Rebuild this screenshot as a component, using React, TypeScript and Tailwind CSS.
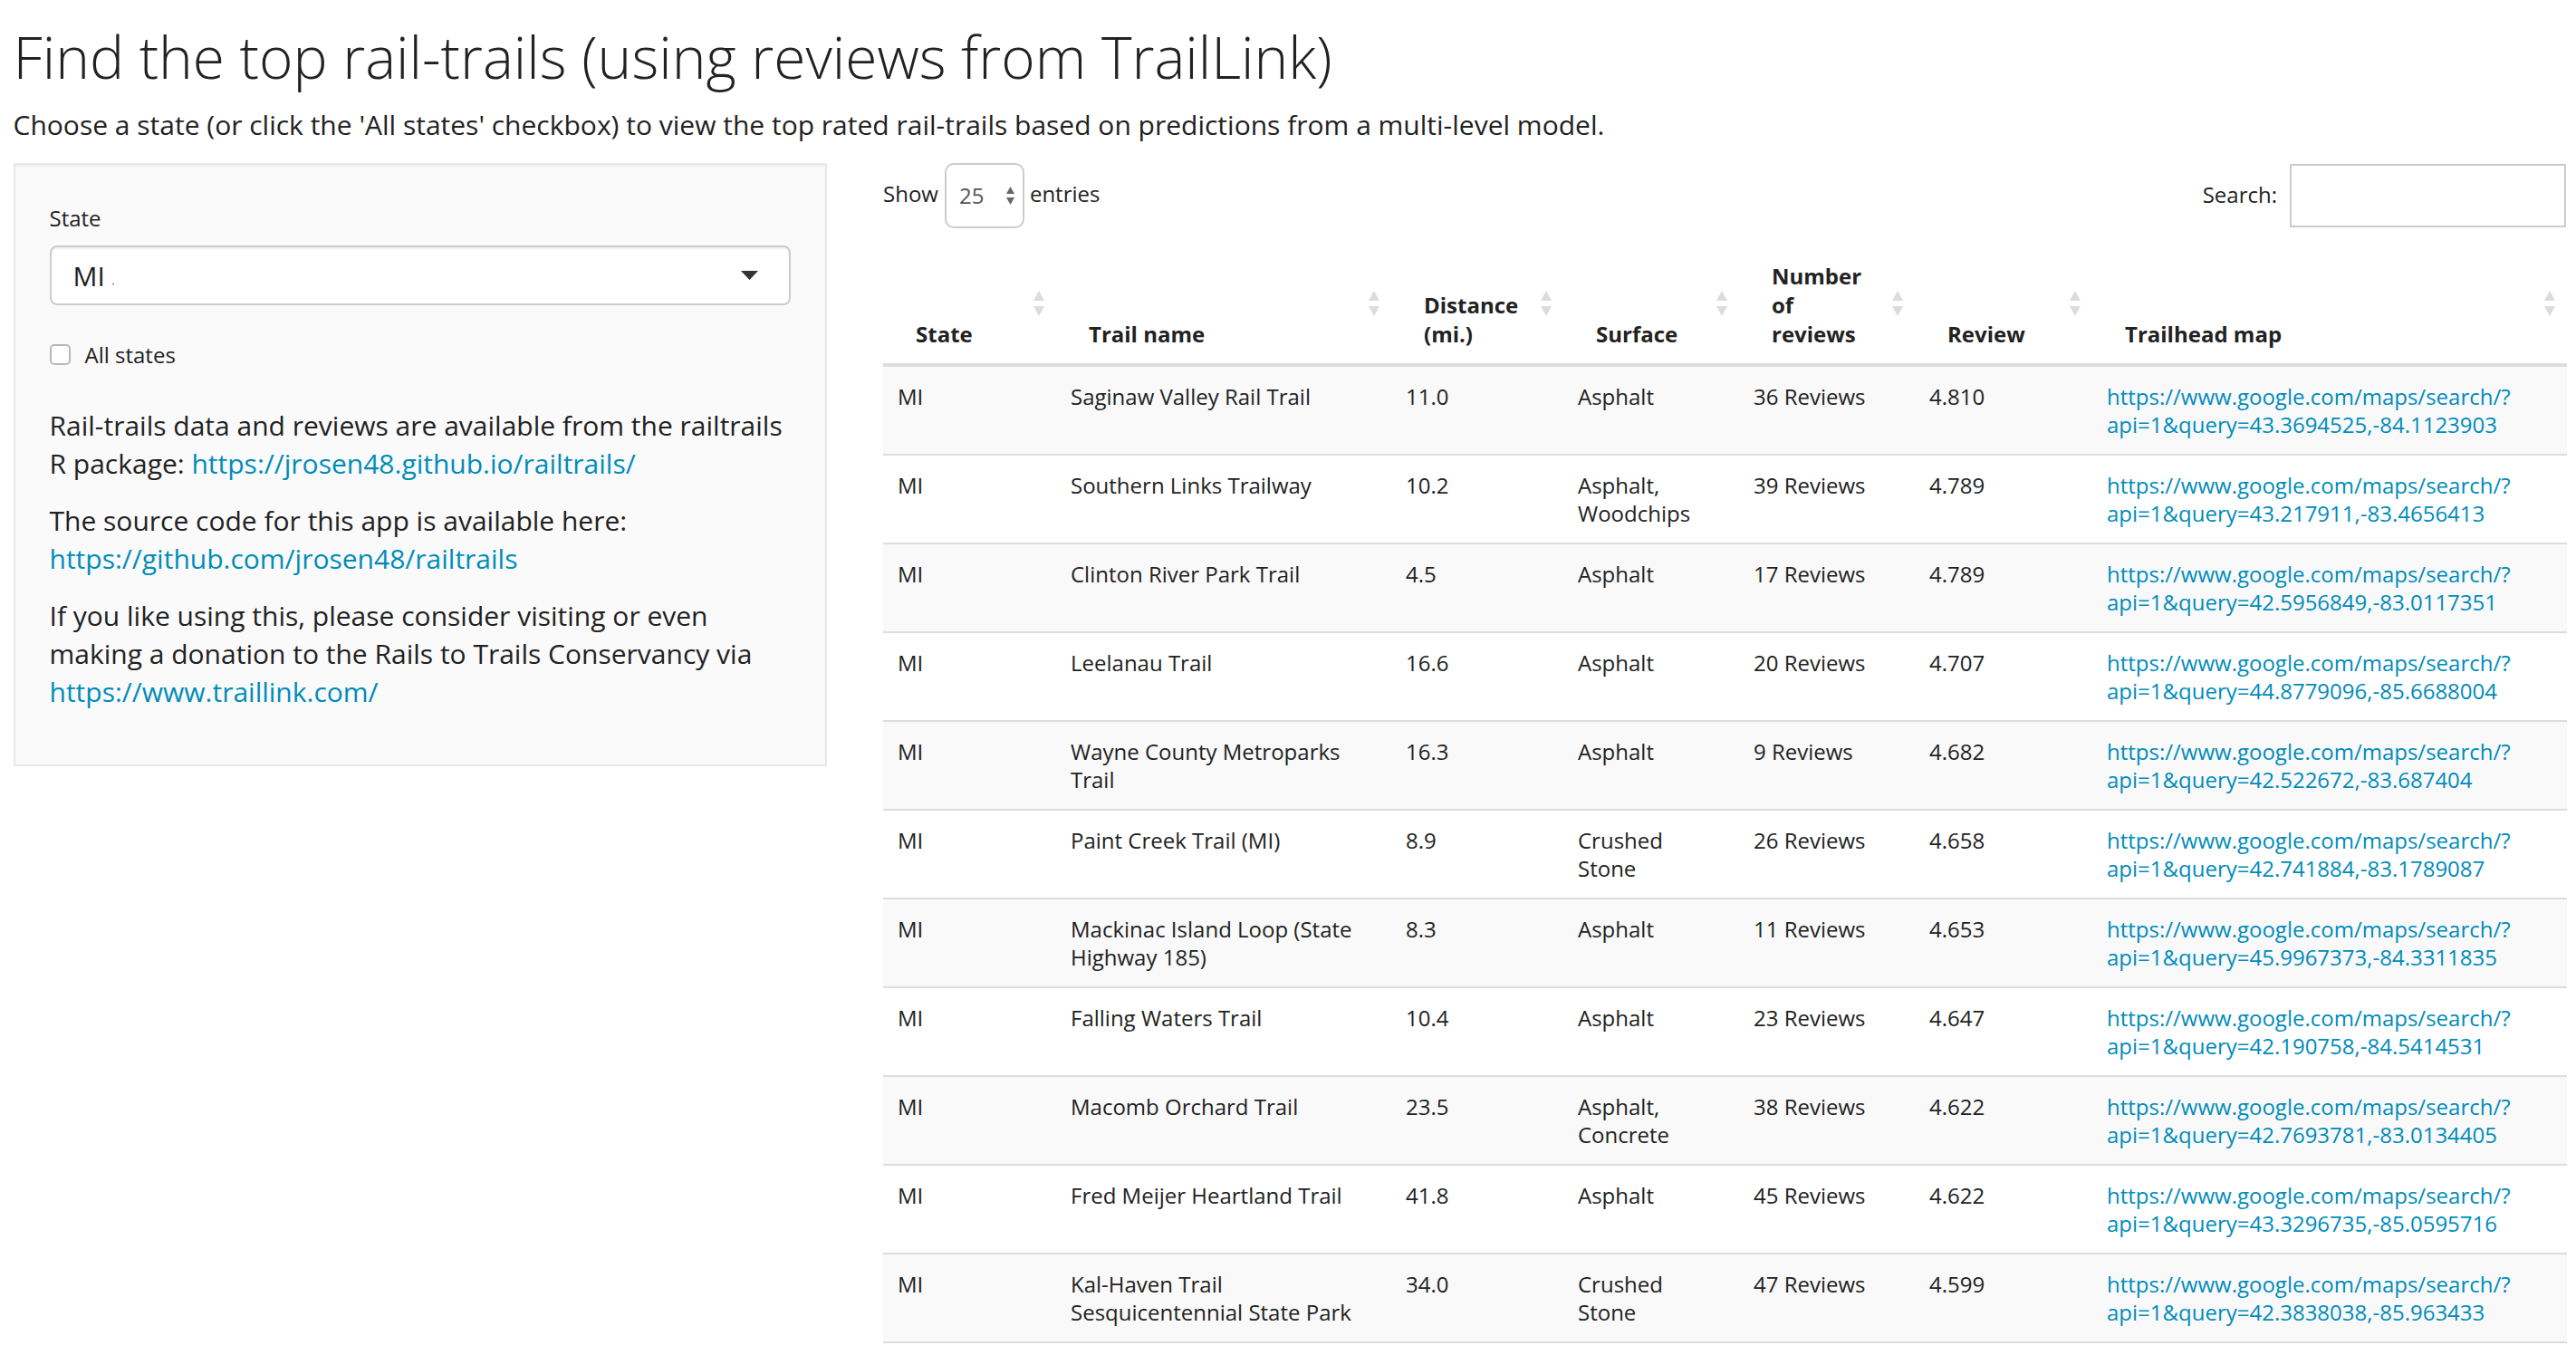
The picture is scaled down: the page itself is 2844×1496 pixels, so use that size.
import React from 'react';

// One row of the ranked trail table
interface Trail {
  state: string;
  name: string;
  dist: string;
  surface: string;
  reviews: string;
  review: string;
  query: string;
}

const trails: Trail[] = [
  { state: 'MI', name: 'Saginaw Valley Rail Trail', dist: '11.0', surface: 'Asphalt', reviews: '36 Reviews', review: '4.810', query: '43.3694525,-84.1123903' },
  { state: 'MI', name: 'Southern Links Trailway', dist: '10.2', surface: 'Asphalt, Woodchips', reviews: '39 Reviews', review: '4.789', query: '43.217911,-83.4656413' },
  { state: 'MI', name: 'Clinton River Park Trail', dist: '4.5', surface: 'Asphalt', reviews: '17 Reviews', review: '4.789', query: '42.5956849,-83.0117351' },
  { state: 'MI', name: 'Leelanau Trail', dist: '16.6', surface: 'Asphalt', reviews: '20 Reviews', review: '4.707', query: '44.8779096,-85.6688004' },
  { state: 'MI', name: 'Wayne County Metroparks Trail', dist: '16.3', surface: 'Asphalt', reviews: '9 Reviews', review: '4.682', query: '42.522672,-83.687404' },
  { state: 'MI', name: 'Paint Creek Trail (MI)', dist: '8.9', surface: 'Crushed Stone', reviews: '26 Reviews', review: '4.658', query: '42.741884,-83.1789087' },
  { state: 'MI', name: 'Mackinac Island Loop (State Highway 185)', dist: '8.3', surface: 'Asphalt', reviews: '11 Reviews', review: '4.653', query: '45.9967373,-84.3311835' },
  { state: 'MI', name: 'Falling Waters Trail', dist: '10.4', surface: 'Asphalt', reviews: '23 Reviews', review: '4.647', query: '42.190758,-84.5414531' },
  { state: 'MI', name: 'Macomb Orchard Trail', dist: '23.5', surface: 'Asphalt, Concrete', reviews: '38 Reviews', review: '4.622', query: '42.7693781,-83.0134405' },
  { state: 'MI', name: 'Fred Meijer Heartland Trail', dist: '41.8', surface: 'Asphalt', reviews: '45 Reviews', review: '4.622', query: '43.3296735,-85.0595716' },
  { state: 'MI', name: 'Kal-Haven Trail Sesquicentennial State Park', dist: '34.0', surface: 'Crushed Stone', reviews: '47 Reviews', review: '4.599', query: '42.3838038,-85.963433' },
];

const columns: { lines: string[]; width: string }[] = [
  { lines: ['State'], width: 'w-[191px]' },
  { lines: ['Trail name'], width: 'w-[370px]' },
  { lines: ['Distance', '(mi.)'], width: 'w-[190px]' },
  { lines: ['Surface'], width: 'w-[194px]' },
  { lines: ['Number', 'of', 'reviews'], width: 'w-[194px]' },
  { lines: ['Review'], width: 'w-[196px]' },
  { lines: ['Trailhead map'], width: 'w-[524px]' },
];

const cell = 'align-top pl-[16px] pr-[20px] pt-[17px] pb-[17px] border-b-2 border-[#dddddd]';

const SortBoth = () => (
  <svg width="14" height="30" viewBox="0 0 14 30" className="absolute right-[12px] top-1/2 -translate-y-1/2">
    <polygon points="7,1 13,12 1,12" fill="#dcdcdc" />
    <polygon points="1,18 13,18 7,29" fill="#dcdcdc" />
  </svg>
);

const App: React.FC = () => {
  return (
    <div className="min-h-screen bg-white text-[#222] font-['Open_Sans','Noto_Sans',sans-serif] pl-[14.5px] pr-[11px]">
      {/* Title */}
      <h2 className="pt-[28px] mb-[18px] text-[64px] leading-[70px] font-light">
        Find the top rail-trails (using reviews from TrailLink)
      </h2>
      <p className="text-[30px] leading-[43px] mb-[21px]">
        Choose a state (or click the 'All states' checkbox) to view the top rated rail-trails based on predictions from a multi-level model.
      </p>

      <div className="flex gap-[62px] items-start">
        {/* Sidebar */}
        <div className="w-[898.5px] shrink-0 bg-[#fafafa] border-2 border-[#e8e8e8] px-[38px] pt-[38px] pb-[38px] shadow-[inset_0_2px_2px_rgba(0,0,0,0.05)]">
          <div className="pt-[4px] text-[24px] leading-[34px]">State</div>
          <div className="mt-[13px] h-[66px] border-2 border-[#cccccc] rounded-[8px] bg-white flex items-center pl-[24px] pr-[34px] text-[30px] shadow-[inset_0_2px_2px_rgba(0,0,0,0.06)]">
            <span>MI</span>
            <div className="ml-[8px] mt-[18px] w-[2px] h-[3px] bg-[#bbb]" />
            <div className="flex-1" />
            <svg width="19" height="10" viewBox="0 0 19 10">
              <polygon points="0,0 19,0 9.5,10" fill="#333" />
            </svg>
          </div>
          <div className="mt-[37.5px] flex items-center gap-[16px] h-[34px]">
            <div className="w-[23px] h-[23px] border-2 border-[#b8b8b8] rounded-[5px] bg-white" />
            <span className="text-[24px] leading-[34px]">All states</span>
          </div>
          <p className="mt-[40.5px] text-[30px] leading-[42px] mb-[21px]">
            Rail-trails data and reviews are available from the railtrails R package:{' '}
            <a className="text-[#008cba]">https://jrosen48.github.io/railtrails/</a>
          </p>
          <p className="text-[30px] leading-[42px] mb-[21px]">
            The source code for this app is available here:{' '}
            <a className="text-[#008cba]">https://github.com/jrosen48/railtrails</a>
          </p>
          <p className="text-[30px] leading-[42px] mb-[21px]">
            If you like using this, please consider visiting or even making a donation to the Rails to Trails Conservancy via{' '}
            <a className="text-[#008cba]">https://www.traillink.com/</a>
          </p>
        </div>

        {/* Main */}
        <div className="flex-1 min-w-0">
          <div className="flex items-center justify-between h-[72px] text-[24px]">
            <div className="flex items-center">
              <span className="-mt-[5px]">Show</span>
              <div className="ml-[7px] mr-[6px] w-[88px] h-[72px] border-2 border-[#cccccc] rounded-[10px] flex items-center justify-between pl-[14px] pr-[9px] text-[#555]">
                <span>25</span>
                <svg width="9" height="20" viewBox="0 0 9 20">
                  <polygon points="4.5,0 9,8 0,8" fill="#666" />
                  <polygon points="0,12 9,12 4.5,20" fill="#666" />
                </svg>
              </div>
              <span className="-mt-[5px]">entries</span>
            </div>
            <div className="flex items-center">
              <span className="-mt-[2px]">Search:</span>
              <div className="ml-[14px] w-[305px] h-[70px] border-2 border-[#cccccc] bg-white" />
            </div>
          </div>

          <table className="mt-[17px] w-full table-fixed border-collapse text-[24px] leading-[31px]">
            <colgroup>
              {columns.map((c, i) => (
                <col key={i} className={c.width} />
              ))}
            </colgroup>
            <thead>
              <tr>
                {columns.map((c, i) => (
                  <th
                    key={i}
                    className="relative text-left align-bottom font-bold pl-[36px] pr-[36px] pt-[20px] pb-[16px] leading-[32px] border-b-4 border-[#dddddd]"
                  >
                    {c.lines.map((l, j) => (
                      <div key={j}>{l}</div>
                    ))}
                    <SortBoth />
                  </th>
                ))}
              </tr>
            </thead>
            <tbody>
              {trails.map((t, i) => {
                const url = `https://www.google.com/maps/search/?api=1&query=${t.query}`;
                const cut = url.indexOf('?') + 1;
                return (
                  <tr key={i} className={i % 2 === 0 ? 'bg-[#f9f9f9]' : 'bg-white'}>
                    <td className={cell}>{t.state}</td>
                    <td className={cell}>{t.name}</td>
                    <td className={cell}>{t.dist}</td>
                    <td className={cell}>{t.surface}</td>
                    <td className={cell}>{t.reviews}</td>
                    <td className={cell}>{t.review}</td>
                    <td className={cell}>
                      <a className="text-[#008cba]">
                        {url.slice(0, cut)}
                        <br />
                        {url.slice(cut)}
                      </a>
                    </td>
                  </tr>
                );
              })}
            </tbody>
          </table>
        </div>
      </div>
    </div>
  );
};

export default App;
